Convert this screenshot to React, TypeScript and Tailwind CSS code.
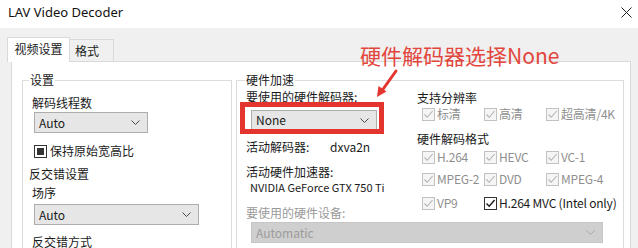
import type { ReactNode } from 'react'

const cjk = { fontFamily: '"Noto Sans CJK SC", "Noto Sans", sans-serif' }

function Chevron({ color = '#4a4a4a' }: { color?: string }) {
  return (
    <svg width="9" height="5" viewBox="0 0 9 5" className="shrink-0">
      <path d="M0.5 0.5 L4.5 4.5 L8.5 0.5" fill="none" stroke={color} strokeWidth="1" />
    </svg>
  )
}

function Select({ value, width, height = 21, disabled }: { value: string; width: number; height?: number; disabled?: boolean }) {
  return (
    <div
      className={
        'flex items-center justify-between pl-[4px] pr-[7px] border text-[12px] leading-none ' +
        (disabled ? 'bg-[#cfcfcf] border-[#c6c6c6] text-[#9b9b9b]' : 'bg-[#e6e6e6] border-[#adadad] text-[#1a1a1a]')
      }
      style={{ width, height }}
    >
      <span>{value}</span>
      <Chevron color={disabled ? '#a8a8a8' : '#4a4a4a'} />
    </div>
  )
}

function Check({ label, enabled }: { label: string; enabled?: boolean }) {
  const c = enabled ? '#1a1a1a' : '#b3b3b3'
  return (
    <div className="flex items-center gap-[2px] h-[16px]">
      <div
        className={
          'w-[13px] h-[13px] shrink-0 border flex items-center justify-center ' +
          (enabled ? 'border-[#333333] bg-white' : 'border-[#c2c2c2] bg-[#f5f5f5]')
        }
      >
        <svg width="11" height="11" viewBox="0 0 11 11">
          <path d="M1.5 5.5 L4.2 8.3 L9.6 2" fill="none" stroke={c} strokeWidth={enabled ? 1.4 : 1.1} />
        </svg>
      </div>
      <span
        className={
          'text-[12px] leading-[16px] whitespace-nowrap tracking-[-0.2px] ' + (enabled ? 'text-[#1a1a1a]' : 'text-[#8f8f8f]')
        }
      >
        {label}
      </span>
    </div>
  )
}

function Label({ children, className = '' }: { children: ReactNode; className?: string }) {
  return <div className={'text-[12px] leading-[16px] text-[#1a1a1a] whitespace-nowrap ' + className}>{children}</div>
}

function Group({ title, width, children, className = '', legendOffset }: { title: string; width: number; children: ReactNode; className?: string; legendOffset: string }) {
  return (
    <fieldset className={'border border-[#dcdcdc] h-[190px] ' + className} style={{ width }}>
      <legend className={'px-[1px] text-[12px] leading-[16px] text-[#1a1a1a] ' + legendOffset}>{title}</legend>
      {children}
    </fieldset>
  )
}

export default function App() {
  return (
    <div className="relative w-[638px] h-[248px] overflow-hidden bg-[#f0f0f0]" style={cjk}>
      {/* title bar */}
      <div className="h-[28px] bg-white flex items-center justify-between pl-[8px] pr-[6px] pb-[3px]">
        <span className="text-[13px] text-[#111111]" style={{ fontFamily: '"Noto Sans", sans-serif' }}>
          LAV Video Decoder
        </span>
        <svg width="11" height="11" viewBox="0 0 11 11">
          <path d="M0.5 0.5 L10.5 10.5 M10.5 0.5 L0.5 10.5" stroke="#222222" strokeWidth="1" />
        </svg>
      </div>

      <div className="pt-[9px] pl-[7px]">
        {/* tabs */}
        <div className="relative z-10 flex items-end h-[25px] -mb-px">
          <div className="h-[25px] w-[63px] border border-b-0 border-[#d9d9d9] bg-white text-[12px] leading-[22px] text-center text-[#1a1a1a]">
            视频设置
          </div>
          <div className="h-[23px] w-[44px] border border-l-0 border-[#d9d9d9] bg-[#f0f0f0] text-[12px] leading-[22px] pl-[5px] text-[#1a1a1a]">
            格式
          </div>
        </div>

        {/* panel */}
        <div className="ml-[4px] w-[620px] h-[200px] border border-[#d9d9d9] bg-white pl-[10px] pt-[10px] flex">
          <Group title="设置" width={210} legendOffset="ml-[6px]">
            <div className="pl-[9px]">
              <Label className="mt-[7px]">解码线程数</Label>
              <div className="mt-[1px] ml-[2px]">
                <Select value="Auto" width={114} />
              </div>
              <div className="mt-[10px] ml-[2px] flex items-center gap-[3px] h-[16px]">
                <div className="w-[13px] h-[13px] border border-[#333333] bg-white flex items-center justify-center">
                  <div className="w-[7px] h-[7px] bg-[#333333]" />
                </div>
                <span className="text-[12px] leading-[16px] text-[#1a1a1a]">保持原始宽高比</span>
              </div>
              <Label className="mt-[7px] -ml-[3px]">反交错设置</Label>
              <Label className="mt-[3px]">场序</Label>
              <div className="mt-[3px] ml-[2px]">
                <Select value="Auto" width={165} />
              </div>
              <Label className="mt-[9px]">反交错方式</Label>
            </div>
          </Group>

          <Group title="硬件加速" width={388} className="ml-[4px]" legendOffset="ml-[8px]">
            <div className="flex">
              <div className="w-[180px] pl-[9px]">
                <Label className="mt-[1px]">要使用的硬件解码器:</Label>
                <div className="mt-[5px] ml-[5px]">
                  <Select value="None" width={126} height={20} />
                </div>
                <div className="mt-[9px] flex">
                  <Label className="w-[84px]">活动解码器:</Label>
                  <Label>dxva2n</Label>
                </div>
                <Label className="mt-[9px]">活动硬件加速器:</Label>
                <div className="mt-[1px] ml-[4px] text-[11px] leading-[13px] text-[#1a1a1a] whitespace-nowrap">
                  NVIDIA GeForce GTX 750 Ti
                </div>
                <Label className="mt-[11px] text-[#9a9a9a]!">要使用的硬件设备:</Label>
              </div>
              <div>
                <Label className="mt-[2px]">支持分辨率</Label>
                <div className="grid grid-cols-[62px_62px_auto] pl-[5px]">
                  <Check label="标清" />
                  <Check label="高清" />
                  <Check label="超高清/4K" />
                </div>
                <Label className="mt-[9px]">硬件解码格式</Label>
                <div className="mt-[2px] grid grid-cols-[62px_62px_auto] pl-[5px]">
                  <Check label="H.264" />
                  <Check label="HEVC" />
                  <Check label="VC-1" />
                </div>
                <div className="mt-[6px] grid grid-cols-[62px_62px_auto] pl-[5px]">
                  <Check label="MPEG-2" />
                  <Check label="DVD" />
                  <Check label="MPEG-4" />
                </div>
                <div className="mt-[8px] grid grid-cols-[62px_62px_auto] pl-[5px]">
                  <Check label="VP9" />
                  <div className="col-span-2">
                    <Check label="H.264 MVC (Intel only)" enabled />
                  </div>
                </div>
              </div>
            </div>
            <div className="mt-[1px] ml-[14px]">
              <Select value="Automatic" width={352} disabled />
            </div>
          </Group>
        </div>
      </div>

      {/* annotation */}
      <div className="absolute left-[360px] top-[43px] text-[21px] leading-[24px] text-[#e2463d] whitespace-nowrap">
        硬件解码器选择None
      </div>
      <div className="absolute left-[240px] top-[102px] w-[144px] h-[32px] border-[5px] border-[#e3342d]" />
      <svg className="absolute left-[370px] top-[66px]" width="32" height="36" viewBox="0 0 32 36">
        <path d="M26 5 L11 26" stroke="#e3342d" strokeWidth="3" strokeLinecap="round" />
        <path d="M7 31 L8.5 20 L16.5 25.5 Z" fill="#e3342d" />
      </svg>
    </div>
  )
}
